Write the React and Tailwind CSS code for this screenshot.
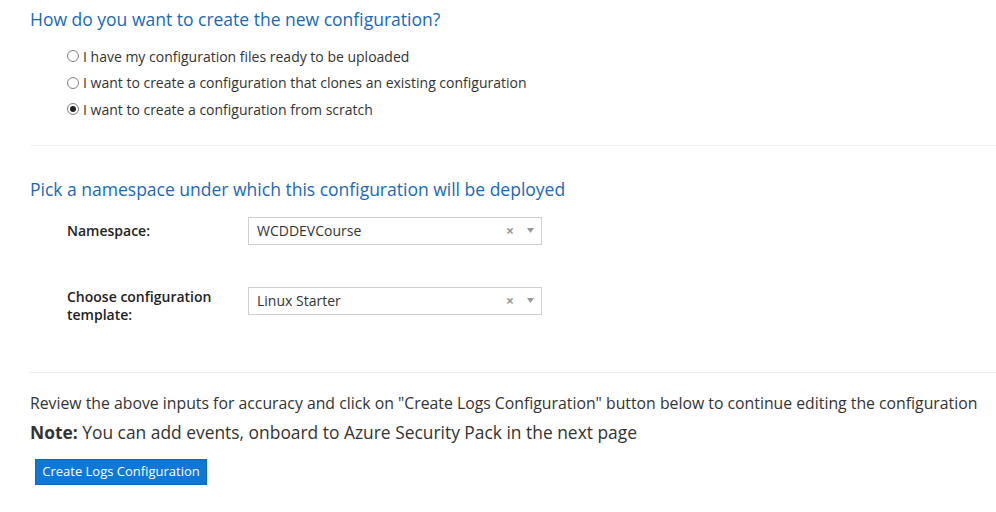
import React from "react";

function Radio({ checked, label }) {
  return (
    <div className="flex items-center h-[26.5px]">
      <span className="w-[12px] h-[12px] rounded-full border border-[#808080] bg-white flex items-center justify-center mr-[4px] shrink-0">
        {checked && <span className="w-[6px] h-[6px] rounded-full bg-[#222]" />}
      </span>
      <span>{label}</span>
    </div>
  );
}

function Select({ value }) {
  return (
    <div className="w-[294px] h-[28px] border border-[#cfcfcf] bg-white flex items-center pl-[8px] pr-[7px] text-[14px] text-[#333]">
      <span className="flex-1">{value}</span>
      <span className="text-[#999] text-[14px] font-bold mr-[13px] leading-none">×</span>
      <svg width="7" height="5" viewBox="0 0 7 5"><path d="M0 0 L7 0 L3.5 5 Z" fill="#999" /></svg>
    </div>
  );
}

export default function App() {
  return (
    <div className="bg-white min-h-[512px] text-[#333]" style={{ fontFamily: '"Open Sans", "Noto Sans", sans-serif' }}>
      <div className="pl-[30px]">
        <h2 className="pt-[7px] text-[17.5px] leading-[24px] text-[#1a69b5] font-normal">
          How do you want to create the new configuration?
        </h2>
        <div className="pl-[37px] mt-[12px] text-[14px] text-[#333]">
          <Radio label="I have my configuration files ready to be uploaded" />
          <Radio label="I want to create a configuration that clones an existing configuration" />
          <Radio checked label="I want to create a configuration from scratch" />
        </div>
        <div className="mt-[22px] border-t border-[#f2f2f2]" />
        <h2 className="mt-[31px] text-[17.5px] leading-[24px] text-[#1a69b5] font-normal">
          Pick a namespace under which this configuration will be deployed
        </h2>
        <div className="pl-[37px] mt-[16px] text-[14px]">
          <div className="flex items-center">
            <div className="w-[181px] font-semibold text-[#222]">Namespace:</div>
            <Select value="WCDDEVCourse" />
          </div>
          <div className="flex items-start mt-[42px]">
            <div className="w-[181px] font-semibold text-[#222] leading-[18px] pt-[1px]">Choose configuration<br />template:</div>
            <Select value="Linux Starter" />
          </div>
        </div>
        <div className="mt-[48px] border-t border-[#ebebeb]" />
        <p className="mt-[19px] text-[15.8px] leading-[22px] text-[#333]">
          Review the above inputs for accuracy and click on "Create Logs Configuration" button below to continue editing the configuration
        </p>
        <p className="mt-[7px] text-[17.4px] leading-[22px] text-[#333]">
          <span className="font-bold">Note:</span> You can add events, onboard to Azure Security Pack in the next page
        </p>
        <button className="mt-[16px] ml-[5px] w-[172px] h-[26px] bg-[#0f78d6] border border-[#0b68c0] text-white text-[13px] leading-none">
          Create Logs Configuration
        </button>
      </div>
    </div>
  );
}
